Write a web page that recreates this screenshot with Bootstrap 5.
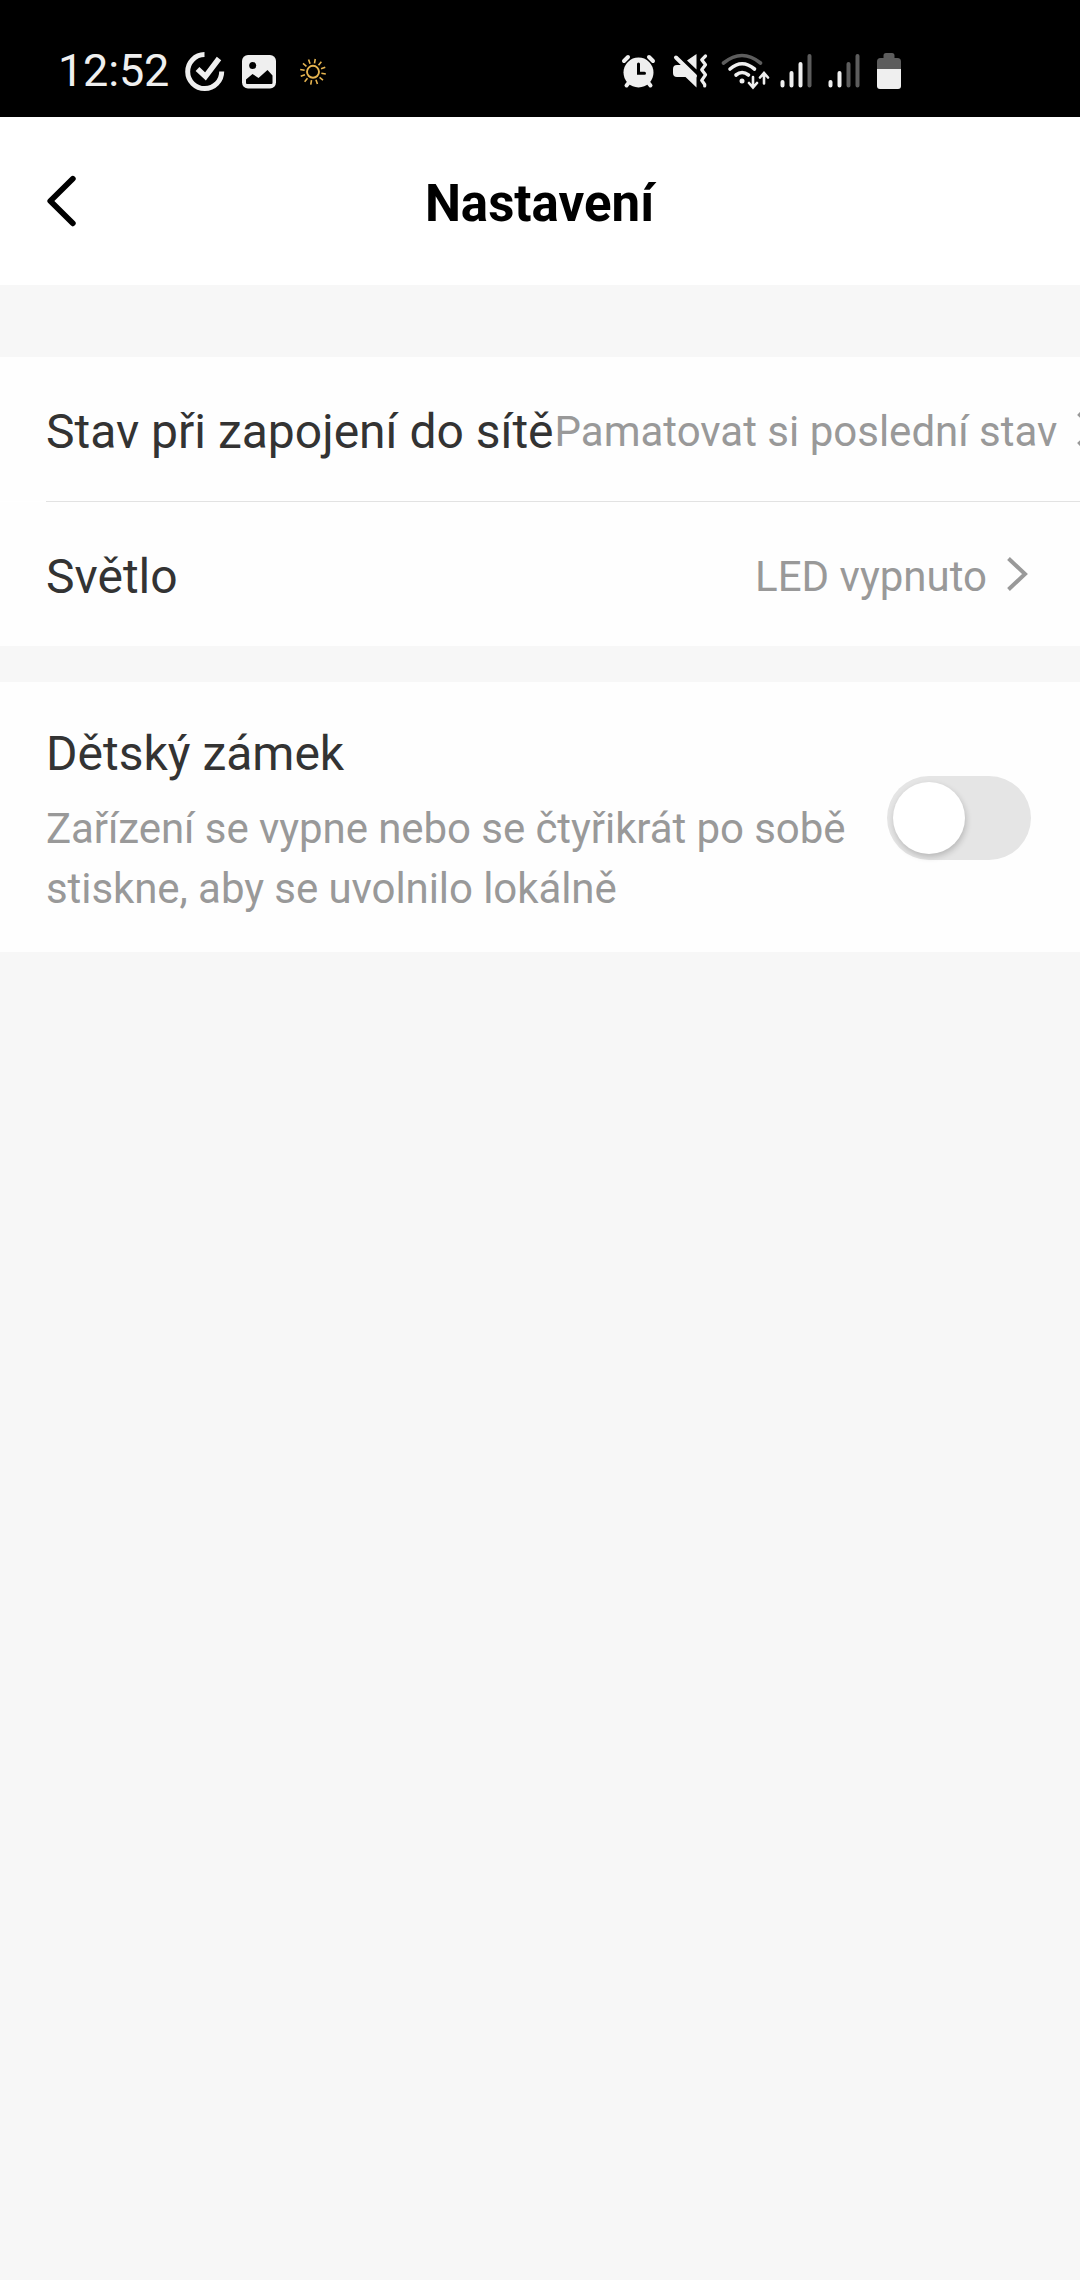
<!DOCTYPE html>
<html lang="cs">
<head>
<meta charset="utf-8">
<title>Nastavení</title>
<link rel="stylesheet" href="https://cdn.jsdelivr.net/npm/bootstrap@5.3.0/dist/css/bootstrap.min.css">
<style>
  body { font-family: Roboto, "Noto Sans", sans-serif; background: #f7f7f7; width: 1080px; min-height: 2280px; overflow-x: hidden; }
  svg { display: block; flex: none; }
  .status-strip { height: 117px; background: #000; color: #efefef; padding: 50px 179px 0 58px; }
  .clock-text { font-size: 45px; line-height: 42px; width: 127px; letter-spacing: -.2px; }
  .title-bar { height: 168px; padding: 0 46px; }
  .title-bar h1 { font-size: 51px; line-height: 60px; font-weight: 700; color: #000; padding: 5px 1px 0 0; }
  .side-slot { width: 60px; }
  .settings { margin-top: 72px; }
  .setting-row { height: 144px; padding: 0 46px; overflow: hidden; background: #fefefe; white-space: nowrap; }
  .divider { height: 1px; background: #e2e2e2; margin-left: 46px; }
  .setting-label { font-size: 48px; line-height: 56px; color: #333; padding-top: 6px; }
  .setting-value { font-size: 42px; line-height: 56px; color: #999; padding: 6px 0 0 1px; }
  .lock-row { height: 270px; margin-top: 36px; padding: 0 49px 0 46px; background: #fefefe; }
  .lock-title { font-size: 48px; line-height: 56px; color: #333; margin-top: 11px; }
  .lock-note { font-size: 42px; line-height: 60px; color: #999; width: 810px; margin-top: 17px; letter-spacing: -.07px; }
  .switch-track { width: 144px; height: 84px; background: #e5e5e5; padding: 6px; margin-top: 2px; flex: none; }
  .switch-knob { width: 72px; height: 72px; background: #fff; box-shadow: 1px 3px 6px rgba(0,0,0,.2); }
</style>
</head>
<body>
<header>
  <div class="status-strip d-flex align-items-start">
    <div class="clock-text">12:52</div>
    <svg width="40" height="42" viewBox="185 50 40 42" fill="none" stroke="#efefef" stroke-width="5"><path d="M204.500 54.600A17 17 0 1 0 221.700 71.500"/><path d="M197.500 69l8 7.500L219 58.500" stroke-width="5.500"/></svg>
    <svg width="70" height="42" viewBox="225 50 70 42"><rect x="242" y="55" width="34" height="33.500" rx="6" fill="#efefef"/><circle cx="252.700" cy="65.500" r="3.500"/><path d="M246 83v-3.500l6.500-5.500 6 4 9-8 5 5.500V83q0 1-1 1h-24.500q-1 0-1-1z"/></svg>
    <svg width="35" height="42" viewBox="295 50 35 42" fill="none" stroke="#e6b450" stroke-width="1.900"><circle cx="313" cy="71.800" r="6"/><path d="M313 58.800v4.500M313 80.300v4.500M300 71.800h4.500M321.500 71.800h4.500M306.500 60.500l2.200 3.900M317.300 79.200l2.200 3.900M301.700 65.300l3.900 2.200M320.400 76.100l3.900 2.200M319.500 60.500l-2.200 3.900M308.700 79.200l-2.200 3.900M324.300 65.300l-3.900 2.200M305.600 76.100l-3.900 2.200" stroke-width="1.600" transform="rotate(10 313 71.800)"/></svg>
    <svg class="ms-auto" width="46" height="42" viewBox="619 50 46 42" fill="none" stroke="#efefef" stroke-width="4" stroke-linecap="round"><circle cx="638.500" cy="72.500" r="15" fill="#efefef" stroke="none"/><path d="M624 61l4-4M653 61l-4-4M626.500 85.500l4-5M650.500 85.500l-4-5"/><path d="M638.500 64v9.200h6" stroke="#000" stroke-width="3"/></svg>
    <svg width="50" height="42" viewBox="665 50 50 42"><path d="M673 69q0-4 4-4h6L696.500 77.500V87.500l-11-10.500h-8.500q-4 0-4-4zM687 60.500l9.500-6.500v15.500z" fill="#efefef"/><path d="M676 57.500L695 76" stroke="#efefef" stroke-width="4" stroke-linecap="round"/><path d="M705.500 56l-3.800 3.800 3.800 5-3.800 5 3.800 5-3.800 5.500 3 4.200v1.500" fill="none" stroke="#efefef" stroke-width="3.200" stroke-linecap="round" stroke-linejoin="round"/></svg>
    <svg width="60" height="42" viewBox="715 50 60 42" fill="none" stroke="#efefef" stroke-width="3.600" stroke-linecap="round"><path d="M723.500 63Q742 48 760.500 63" stroke="#5d5d5d"/><path d="M730 69Q742 58.500 754.500 69M736 75Q742 70 748.500 75"/><circle cx="742" cy="81" r="2.500" fill="#efefef" stroke="none"/><path d="M753 77v10M749 83l4 4.500 4-4.500M764 83.500V73.500M760 77.500l4-4.500 4 4.500" stroke-width="2.600"/></svg>
    <svg width="45" height="42" viewBox="775 50 45 42" stroke="#efefef" stroke-width="4" stroke-linecap="round"><path d="M782.500 82v3.500M791.500 73v12.500M800.500 64v21.500"/><path d="M809.500 56v29.500" stroke="#5d5d5d"/></svg>
    <svg width="45" height="42" viewBox="820 50 45 42" stroke="#efefef" stroke-width="4" stroke-linecap="round"><path d="M830.500 82v3.500M839.500 73v12.500"/><path d="M848.500 64v21.500M857.500 56v29.500" stroke="#5d5d5d"/></svg>
    <svg width="36" height="42" viewBox="865 50 36 42"><path d="M877 69v-7.500q0-3.500 3.500-3.500h3v-2.500q0-2.500 2.500-2.500h6q2.500 0 2.500 2.500V58h3q3.500 0 3.500 3.500V69z" fill="#5d5d5d"/><path d="M877 69h24v17q0 3-3 3h-18q-3 0-3-3z" fill="#efefef"/></svg>
  </div>
  <div class="title-bar bg-white d-flex align-items-center justify-content-between">
    <div class="side-slot"><svg width="34" height="54" viewBox="46 174 34 54" fill="none" stroke="#000" stroke-width="5.800" stroke-linecap="round" stroke-linejoin="round"><path d="M72.800 178.800L50.300 201l22.500 22.300"/></svg></div>
    <h1 class="m-0">Nastavení</h1>
    <div class="side-slot"></div>
  </div>
</header>
<main class="settings">
  <div class="setting-row d-flex align-items-center">
    <div class="setting-label flex-shrink-0">Stav při zapojení do sítě</div>
    <div class="setting-value flex-shrink-0 ms-auto">Pamatovat si poslední stav</div>
    <svg class="chevron" width="47" height="40" viewBox="987 555 47 40" fill="none" stroke="#999" stroke-width="4"><path d="M1008.500 559.500L1025 575l-16.500 15.500"/></svg>
  </div>
  <div class="bg-white"><div class="divider"></div></div>
  <div class="setting-row d-flex align-items-center">
    <div class="setting-label flex-shrink-0">Světlo</div>
    <div class="setting-value flex-shrink-0 ms-auto">LED vypnuto</div>
    <svg class="chevron" width="47" height="40" viewBox="987 555 47 40" fill="none" stroke="#999" stroke-width="4"><path d="M1008.500 559.500L1025 575l-16.500 15.500"/></svg>
  </div>
  <div class="lock-row d-flex align-items-center justify-content-between">
    <div>
      <div class="lock-title">Dětský zámek</div>
      <div class="lock-note">Zařízení se vypne nebo se čtyřikrát po sobě stiskne, aby se uvolnilo lokálně</div>
    </div>
    <div class="switch-track rounded-pill" role="switch" aria-checked="false" aria-label="Dětský zámek"><div class="switch-knob rounded-circle"></div></div>
  </div>
</main>
<script src="https://cdn.jsdelivr.net/npm/bootstrap@5.3.0/dist/js/bootstrap.bundle.min.js"></script>
</body>
</html>
